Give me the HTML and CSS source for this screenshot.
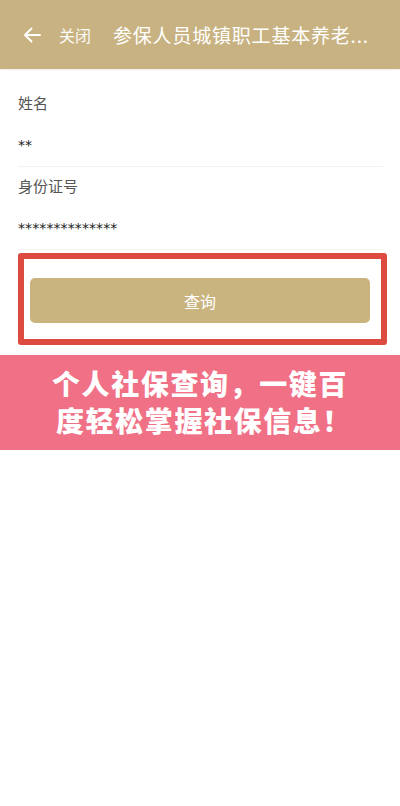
FILE: index.html
```html
<!DOCTYPE html>
<html lang="zh">
<head>
<meta charset="utf-8">
<link rel="stylesheet" href="styles.css">
</head>
<body>
<header class="bar">
  <svg class="back" width="20" height="18" viewBox="0 0 20 18"><path d="M18 9H3M9.5 2.5L3 9l6.5 6.5" fill="none" stroke="#fff" stroke-width="2" stroke-linecap="round" stroke-linejoin="round"/></svg>
  <span class="close">关闭</span>
  <span class="title">参保人员城镇职工基本养老...</span>
</header>
<main class="form">
  <div class="field">
    <div class="label">姓名</div>
    <div class="value">**</div>
  </div>
  <div class="field">
    <div class="label">身份证号</div>
    <div class="value">**************</div>
  </div>
  <div class="hl">
    <div class="btn">查询</div>
  </div>
</main>
<section class="banner">
  <p>个人社保查询，一键百</p>
  <p class="l2">度轻松掌握社保信息！</p>
</section>
</body>
</html>
```
FILE: styles.css
```css
html, body { margin: 0; padding: 0; background: #fff; }
body { font-family: "Noto Sans CJK SC", "Noto Sans", sans-serif; width: 400px; }
.bar {
  height: 69px;
  background: #c8b281;
  display: flex;
  align-items: center;
  padding: 0 0 0 22px;
  box-sizing: border-box;
  color: #fff;
  box-shadow: 0 1px 2px rgba(0,0,0,0.08);
}
.back { margin-right: 17px; margin-top: 1px; }
.close { font-size: 16px; margin-right: 22px; opacity: 0.95; }
.title {
  font-size: 19px;
  white-space: nowrap;
  letter-spacing: 0.8px;
}
.form { padding: 0 17px 0 18px; }
.field { border-bottom: 1px solid #f1f1f1; height: 83px; box-sizing: border-box; padding-top: 8px; }
.field:first-child { height: 98px; padding-top: 23px; }
.label { font-size: 15px; color: #555; line-height: 22px; }
.value { font-size: 14px; color: #222; line-height: 18px; margin-top: 22px; font-family: "DejaVu Sans", sans-serif; letter-spacing: 0.1px; }
.hl {
  margin: 3px -4px 10px 0;
  border: 6px solid #dc4a40;
  border-radius: 3px;
  padding: 19px 11px 16px 6px;
}
.btn {
  height: 45px;
  background: #c9b47f;
  border-radius: 5px;
  color: #fff;
  font-size: 16px;
  display: flex;
  align-items: center;
  justify-content: center;
}
.banner {
  background: #f07086;
  height: 95px;
  display: flex;
  flex-direction: column;
  justify-content: center;
  align-items: center;
  padding-bottom: 2px;
  box-sizing: border-box;
}
.banner p {
  margin: 0;
  color: #fff;
  font-weight: 900;
  font-size: 28px;
  line-height: 37px;
  height: 37px;
  letter-spacing: 1.6px;
}
.banner .l2 { padding-left: 8px; }
```
